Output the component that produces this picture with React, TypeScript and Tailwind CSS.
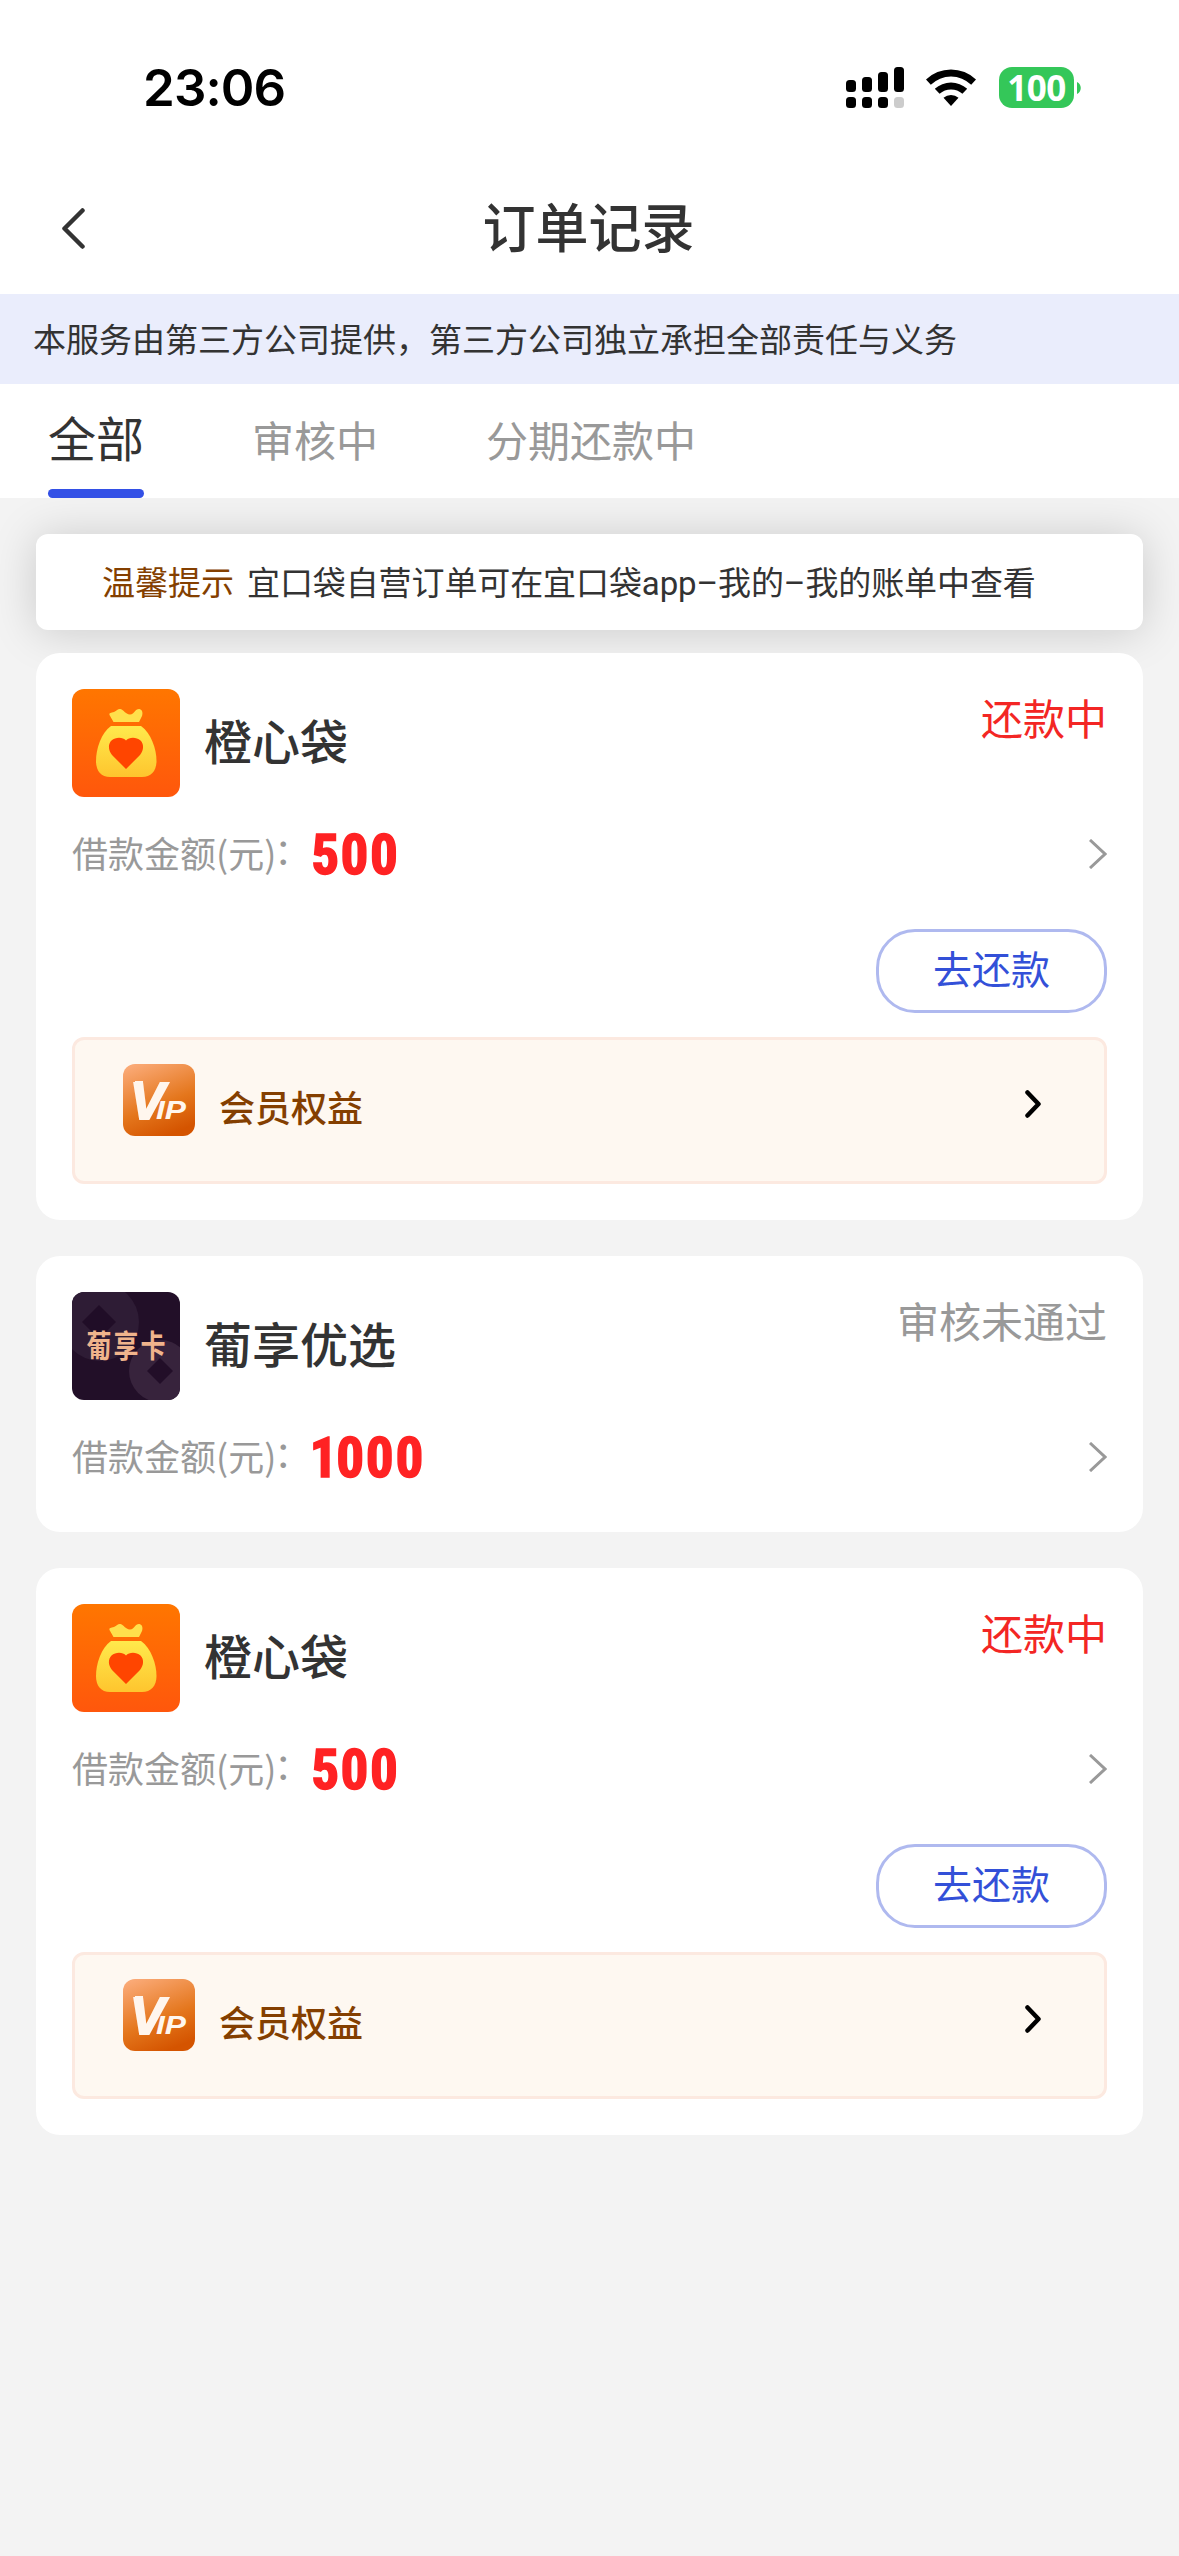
import { Fragment } from 'react'

const tabs = [
  { key: 'all', label: '全部' },
  { key: 'reviewing', label: '审核中' },
  { key: 'repaying', label: '分期还款中' },
]

const orders = [
  { id: 1, name: '橙心袋', logo: 'bag', amount: '500', status: '还款中', repaying: true },
  { id: 2, name: '葡享优选', logo: 'card', amount: '1000', status: '审核未通过', repaying: false },
  { id: 3, name: '橙心袋', logo: 'bag', amount: '500', status: '还款中', repaying: true },
]

function StatusBar() {
  return (
    <div className="flex h-[162px] items-start justify-between pl-[143px] pr-[98px] pt-[56px] text-black">
      <div className="font-[Inter] text-[51px] font-semibold leading-[64px] tracking-[-0.9px]">23:06</div>
      <div className="flex items-center pt-[11px]">
        <svg width="58" height="41" viewBox="0 0 58 41">
          <rect x="0" y="13" width="10" height="12" rx="3.5" />
          <rect x="16" y="10" width="10" height="15" rx="3.5" />
          <rect x="32" y="5" width="10" height="20" rx="3.5" />
          <rect x="48" y="0" width="10" height="25" rx="3.5" />
          <rect x="0" y="30" width="10" height="11" rx="3.5" />
          <rect x="16" y="30" width="10" height="11" rx="3.5" />
          <rect x="32" y="30" width="10" height="11" rx="3.5" />
          <rect x="48" y="30" width="10" height="11" rx="3.5" fill="#ccc" />
        </svg>
        <svg className="ml-[22px]" width="50" height="37" viewBox="0 0 50 37">
          <path d="M0 10.500A36 36 0 0 1 50 10.500L45.200 15.800A29 29 0 0 0 4.800 15.800Z" />
          <path d="M8.800 19.800A24 24 0 0 1 41.200 19.800L36.400 24.800A17 17 0 0 0 13.600 24.800Z" />
          <path d="M17.500 28.800A11.500 11.500 0 0 1 32.500 28.800L25 37Z" />
        </svg>
        <div className="ml-[23px] flex h-[41px] w-[75px] items-center justify-center rounded-[13px] bg-[#34c759] font-['Noto_Sans'] text-[35px] font-bold leading-none tracking-[-0.5px] text-white">
          100
        </div>
        <svg className="ml-[3px]" width="4" height="12" viewBox="0 0 4 12">
          <path d="M0 0C5 2 5 10 0 12Z" fill="#34c759" />
        </svg>
      </div>
    </div>
  )
}

function BagLogo() {
  return (
    <svg width="108" height="108" viewBox="0 0 108 108" className="rounded-xl">
      <defs>
        <linearGradient id="bagBg" x1="0" y1="0" x2="0" y2="1">
          <stop offset="0" stopColor="#ff7600" />
          <stop offset="1" stopColor="#ff570c" />
        </linearGradient>
        <linearGradient id="bagBody" x1="0" y1="0" x2="0" y2="1">
          <stop offset="0" stopColor="#ffea4c" />
          <stop offset="1" stopColor="#fec52e" />
        </linearGradient>
      </defs>
      <rect width="108" height="108" fill="url(#bagBg)" />
      <path d="M41.500 33L37.500 26C37 23.500 39 24 42 23C45 21.500 46 19.500 48.500 20C52 21 53 25 58 25.500C63 25 63 19.500 67.500 20C70.500 21 71 24 70 27L67 33Z" fill="#ffe04c" />
      <path d="M39 37H69C79 44 84.500 60 84.500 72C84.500 82 79 88 70 88H38C29 88 24 82 24 72C24 60 29 44 39 37Z" fill="url(#bagBody)" />
      <path d="M54 80L40 66C36 61 36 55 39.500 51.500C44 47.500 51 48 54 51.500C57 48 64 47.500 68.500 51.500C72 55 72 61 68 66Z" fill="#ff4500" />
    </svg>
  )
}

function CardLogo() {
  return (
    <svg width="108" height="108" viewBox="0 0 108 108" className="rounded-xl">
      <rect width="108" height="108" fill="#220f28" />
      <circle cx="28" cy="30" r="39" fill="#2e1c35" />
      <path d="M27 13L44 30L27 47L10 30Z" fill="#200d27" />
      <circle cx="88" cy="79" r="31" fill="#37233c" />
      <path d="M88 66L101 79L88 92L75 79Z" fill="#220e28" />
      <text x="55" y="65" textAnchor="middle" fill="#f0b48c" fontSize="25" fontWeight="700" letterSpacing="2" transform="translate(0 -16) scale(1 1.250)">
        葡享卡
      </text>
    </svg>
  )
}

function VipLogo() {
  return (
    <svg width="72" height="72" viewBox="0 0 72 72" className="rounded-xl">
      <defs>
        <linearGradient id="vipBg" x1="0.2" y1="0" x2="0.6" y2="1">
          <stop offset="0" stopColor="#faa975" />
          <stop offset="0.6" stopColor="#e4761c" />
          <stop offset="1" stopColor="#d45400" />
        </linearGradient>
      </defs>
      <rect width="72" height="72" fill="url(#vipBg)" />
      <rect x="12" y="17" width="8" height="4" fill="#fff6ee" />
      <g fill="#fff6ee" fontFamily="Liberation Sans" fontWeight="700" fontStyle="italic">
        <text x="7" y="54.500" stroke="#fff6ee" strokeWidth="2" fontSize="52">V</text>
        <text x="33" y="54.500" fontSize="26" textLength="30" lengthAdjust="spacingAndGlyphs">IP</text>
      </g>
    </svg>
  )
}

function OrderCard({ order }: { order: (typeof orders)[number] }) {
  return (
    <section className="rounded-3xl bg-white p-9">
      <div className="flex h-[108px]">
        {order.logo === 'bag' ? <BagLogo /> : <CardLogo />}
        <h2 className="ml-6 self-center pb-2 text-5xl font-medium text-[#333]">{order.name}</h2>
        <span className={order.repaying ? 'ml-auto text-[42px] leading-[56px] text-[#f32624]' : 'ml-auto text-[42px] leading-[56px] text-[#999]'}>
          {order.status}
        </span>
      </div>
      <div className="mt-[21px] flex h-[72px] items-center">
        <span className="flex pb-1 text-4xl text-[#999]">
          借款金额(元)<span className="-ml-0.5 -mt-[3px] mr-px">：</span>
        </span>
        <span className="pt-[3px] font-['Roboto_Condensed',Roboto] text-[55px] font-bold proportional-nums leading-none tracking-[0.8px] text-[#ff2223] [-webkit-text-stroke:1.5px_#ff2223] [font-stretch:80%]">
          {order.amount}
        </span>
        <svg className="ml-auto" width="18" height="30" viewBox="0 0 18 30" fill="none" stroke="#999" strokeWidth="3">
          <path d="M1 1L16 15L1 29" />
        </svg>
      </div>
      {order.repaying ? (
        <Fragment>
          <button className="ml-auto mt-[39px] flex h-[84px] w-[231px] items-center justify-center rounded-[39px] border-3 border-[#afb9ef] pb-2 text-[39px] text-[#3350d8]">
            去还款
          </button>
          <div className="mt-6 flex h-[147px] items-start rounded-xl border-3 border-[#fce9e0] bg-[#fef8f1] pl-12 pr-[63px] pt-6">
            <VipLogo />
            <span className="ml-6 mt-[15px] text-4xl font-medium leading-[54px] text-[#843f00]">会员权益</span>
            <svg className="ml-auto mt-[26px]" width="16" height="28" viewBox="0 0 16 28" fill="none" stroke="#000" strokeWidth="4.500" strokeLinecap="round" strokeLinejoin="round">
              <path d="M2.500 2.500L13.500 14L2.500 25.500" />
            </svg>
          </div>
        </Fragment>
      ) : (
        <div className="h-[3px]" />
      )}
    </section>
  )
}

export default function App() {
  return (
    <div className="min-h-[2556px] w-[1179px] bg-[#f3f3f3] font-['Noto_Sans_CJK_SC',sans-serif] text-[#333]">
      <header className="bg-white">
        <StatusBar />
        <div className="flex h-[132px] items-center pl-[62px] pr-[87px]">
          <svg width="23" height="41" viewBox="0 0 23 41" fill="none" stroke="#333" strokeWidth="4.500" strokeLinecap="round" strokeLinejoin="round">
            <path d="M20.500 2.500L2.500 20.500L20.500 38.500" />
          </svg>
          <h1 className="flex-1 pb-1 text-center text-[53px] font-medium">订单记录</h1>
        </div>
      </header>
      <div className="flex h-[90px] items-center bg-[#eaedfc] pl-[33px] text-[33px]">
        本服务由第三方公司提供，第三方公司独立承担全部责任与义务
      </div>
      <nav className="relative z-10 flex h-[114px] gap-[108px] bg-white pl-12">
        {tabs.map((tab) => (
          <div key={tab.key} className="flex flex-col justify-between">
            {tab.key === 'all' ? (
              <>
                <span className="pt-[16px] text-5xl leading-[72px]">{tab.label}</span>
                <span className="h-[9px] rounded-full bg-[#3350e6]" />
              </>
            ) : (
              <span className="pt-[20px] text-[42px] leading-[69px] text-[#999]">{tab.label}</span>
            )}
          </div>
        ))}
      </nav>
      <main className="px-9 pt-9">
        <div className="flex h-24 items-center rounded-xl bg-white pl-[66px] pt-[3px] font-[Roboto,'Noto_Sans_CJK_SC'] text-[33px] shadow-[0_2px_45px_rgba(0,0,0,0.17)]">
          <span className="mr-[13px] text-[#843f00]">温馨提示</span>
          <span className="tracking-[-0.1px]">宜口袋自营订单可在宜口袋app–我的–我的账单中查看</span>
        </div>
        <div className="relative mt-[23px] space-y-9">
          {orders.map((order) => (
            <OrderCard key={order.id} order={order} />
          ))}
        </div>
      </main>
    </div>
  )
}
